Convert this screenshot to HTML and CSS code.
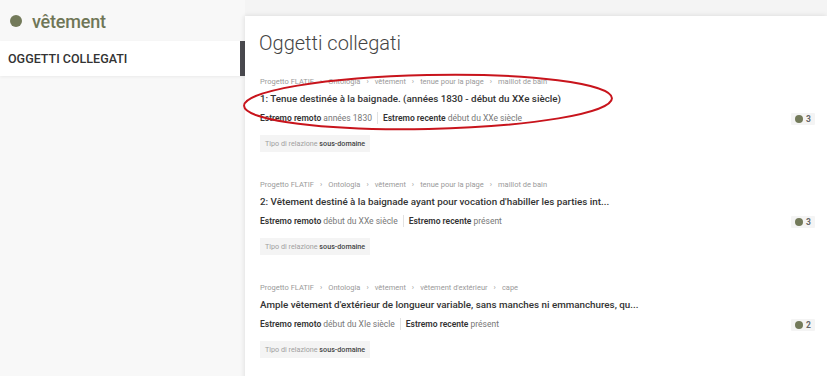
FILE: index.html
```html
<!DOCTYPE html>
<html lang="it">
<head>
<meta charset="utf-8">
<title>Oggetti collegati</title>
<link rel="stylesheet" href="styles.css">
</head>
<body>
<div class="page">
  <aside class="sidebar">
    <div class="side-head"><span class="dot"></span><span class="side-title">vêtement</span></div>
    <div class="side-item active">OGGETTI COLLEGATI</div>
  </aside>
  <main class="main">
    <div class="topstrip"></div>
    <section class="panel">
      <h1 class="panel-title">Oggetti collegati</h1>
      <div class="item">
        <div class="crumbs"><span>Progetto FLATIF</span><span class="sep">›</span><span>Ontologia</span><span class="sep">›</span><span>vêtement</span><span class="sep">›</span><span>tenue pour la plage</span><span class="sep">›</span><span>maillot de bain</span></div>
        <div class="row">
          <div class="body">
            <div class="title">1: Tenue destinée à la baignade. (années 1830 - début du XXe siècle)</div>
            <div class="meta"><span><b>Estremo remoto</b> années 1830</span><span class="bar"></span><span><b>Estremo recente</b> début du XXe siècle</span></div>
          </div>
          <div class="badge"><span class="bdot"></span>3</div>
        </div>
        <div class="tag">Tipo di relazione <b>sous-domaine</b></div>
      </div>
      <div class="item">
        <div class="crumbs"><span>Progetto FLATIF</span><span class="sep">›</span><span>Ontologia</span><span class="sep">›</span><span>vêtement</span><span class="sep">›</span><span>tenue pour la plage</span><span class="sep">›</span><span>maillot de bain</span></div>
        <div class="row">
          <div class="body">
            <div class="title">2: Vêtement destiné à la baignade ayant pour vocation d'habiller les parties int...</div>
            <div class="meta"><span><b>Estremo remoto</b> début du XXe siècle</span><span class="bar"></span><span><b>Estremo recente</b> présent</span></div>
          </div>
          <div class="badge"><span class="bdot"></span>3</div>
        </div>
        <div class="tag">Tipo di relazione <b>sous-domaine</b></div>
      </div>
      <div class="item">
        <div class="crumbs"><span>Progetto FLATIF</span><span class="sep">›</span><span>Ontologia</span><span class="sep">›</span><span>vêtement</span><span class="sep">›</span><span>vêtement d'extérieur</span><span class="sep">›</span><span>cape</span></div>
        <div class="row">
          <div class="body">
            <div class="title">Ample vêtement d'extérieur de longueur variable, sans manches ni emmanchures, qu...</div>
            <div class="meta"><span><b>Estremo remoto</b> début du XIe siècle</span><span class="bar"></span><span><b>Estremo recente</b> présent</span></div>
          </div>
          <div class="badge"><span class="bdot"></span>2</div>
        </div>
        <div class="tag">Tipo di relazione <b>sous-domaine</b></div>
      </div>
    </section>
  </main>
  <svg class="annot" width="827" height="376" viewBox="0 0 827 376" aria-hidden="true">
    <ellipse cx="428" cy="102" rx="184" ry="27" transform="rotate(-1.2 428 102)" fill="none" stroke="#c8141c" stroke-width="2"/>
  </svg>
</div>
</body>
</html>
```
FILE: styles.css
```css
* { box-sizing: border-box; }
html, body { margin: 0; padding: 0; }
body {
  font-family: Roboto, "Noto Sans", "Liberation Sans", sans-serif;
  background: #f7f7f7;
  color: #333;
  width: 827px;
  height: 376px;
  overflow: hidden;
}
.page {
  position: relative;
  display: flex;
  width: 827px;
  height: 376px;
}
.sidebar {
  width: 245px;
  flex: none;
  background: #f8f8f8;
  padding-top: 9px;
}
.side-head {
  display: flex;
  align-items: center;
  height: 24px;
  padding-left: 10px;
  margin-bottom: 8px;
}
.dot {
  width: 12px;
  height: 12px;
  border-radius: 50%;
  background: #737a5a;
  margin-right: 10px;
}
.side-title {
  font-size: 18px;
  font-weight: 500;
  color: #6f7657;
  letter-spacing: -0.2px;
}
.side-item {
  height: 35px;
  display: flex;
  align-items: center;
  padding-left: 8px;
  font-size: 12.5px;
  font-weight: 500;
  color: #333;
  background: #fff;
  border-right: 5px solid #4b4b50;
  box-shadow: 0 1px 3px rgba(0,0,0,0.06);
}
.main {
  flex: 1;
  display: flex;
  flex-direction: column;
  background: #f7f7f7;
}
.topstrip {
  height: 16px;
  background: #f4f4f4;
  flex: none;
}
.panel {
  flex: 1;
  background: #fff;
  padding: 14px 12px 0 14px;
  box-shadow: -2px 0 4px rgba(0,0,0,0.05), 0 -2px 4px rgba(0,0,0,0.04);
}
.panel-title {
  margin: 0 0 21px 0;
  font-size: 20px;
  line-height: 26px;
  font-weight: 300;
  color: #444;
}
.item {
  height: 103px;
  padding-left: 1px;
}
.crumbs {
  font-size: 7.5px;
  color: #9a9a9a;
  line-height: 10px;
  display: flex;
}
.crumbs .sep { margin: 0 6px; }
.row {
  display: flex;
  align-items: flex-end;
}
.body { flex: 1; }
.title {
  margin-top: 4px;
  font-size: 9.8px;
  line-height: 16px;
  font-weight: 500;
  color: #333;
}
.meta {
  margin-top: 5px;
  font-size: 8.5px;
  line-height: 12px;
  color: #777;
  display: flex;
  align-items: center;
}
.meta b { color: #333; font-weight: 600; }
.bar {
  width: 1px;
  height: 12px;
  background: #e2e2e2;
  margin: 0 5px;
}
.badge {
  display: flex;
  align-items: center;
  background: #f4f4f4;
  height: 12px;
  padding: 0 4px;
  margin-bottom: -1px;
  font-size: 8.5px;
  font-weight: 700;
  color: #666;
  border-radius: 1px;
}
.bdot {
  width: 8px;
  height: 8px;
  border-radius: 50%;
  background: #737a5a;
  margin-right: 3px;
}
.tag {
  display: inline-block;
  margin-top: 11px;
  background: #f4f4f4;
  font-size: 7.2px;
  line-height: 17px;
  padding: 0 5px;
  color: #a0a0a0;
}
.tag b { color: #444; font-weight: 500; }
.annot {
  position: absolute;
  left: 0;
  top: 0;
  pointer-events: none;
}
```
